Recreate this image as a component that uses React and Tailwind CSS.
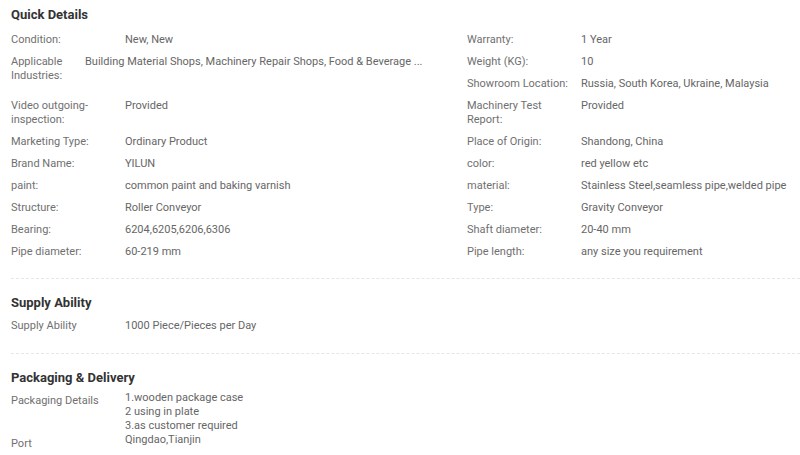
import React from "react";

const leftRows = [
  { l: ["Condition:"], v: "New, New", h: "h-[22px]" },
  { l: ["Applicable", "Industries:"], v: "Building Material Shops, Machinery Repair Shops, Food & Beverage ...", h: "h-[44px]", lw: "w-[74px]" },
  { l: ["Video outgoing-", "inspection:"], v: "Provided", h: "h-[36px]" },
  { l: ["Marketing Type:"], v: "Ordinary Product", h: "h-[22px]" },
  { l: ["Brand Name:"], v: "YILUN", h: "h-[22px]" },
  { l: ["paint:"], v: "common paint and baking varnish", h: "h-[22px]" },
  { l: ["Structure:"], v: "Roller Conveyor", h: "h-[22px]" },
  { l: ["Bearing:"], v: "6204,6205,6206,6306", h: "h-[22px]" },
  { l: ["Pipe diameter:"], v: "60-219 mm", h: "h-[22px]" },
];

const rightRows = [
  { l: ["Warranty:"], v: "1 Year", h: "h-[22px]" },
  { l: ["Weight (KG):"], v: "10", h: "h-[22px]" },
  { l: ["Showroom Location:"], v: "Russia, South Korea, Ukraine, Malaysia", h: "h-[22px]" },
  { l: ["Machinery Test", "Report:"], v: "Provided", h: "h-[36px]" },
  { l: ["Place of Origin:"], v: "Shandong, China", h: "h-[22px]" },
  { l: ["color:"], v: "red yellow etc", h: "h-[22px]" },
  { l: ["material:"], v: "Stainless Steel,seamless pipe,welded pipe", h: "h-[22px]" },
  { l: ["Type:"], v: "Gravity Conveyor", h: "h-[22px]" },
  { l: ["Shaft diameter:"], v: "20-40 mm", h: "h-[22px]" },
  { l: ["Pipe length:"], v: "any size you requirement", h: "h-[22px]" },
];

function Row({ r }) {
  return (
    <div className={`flex py-[4px] box-border ${r.h}`}>
      <div className={`${r.lw || "w-[114px]"} shrink-0 text-[#707070]`}>
        {r.l.map((t, i) => (
          <div key={i}>{t}</div>
        ))}
      </div>
      <div className="flex-1 whitespace-nowrap overflow-hidden text-[#666]">{r.v}</div>
    </div>
  );
}

function Heading({ children }) {
  return (
    <div className="text-[13px] leading-[18px] font-bold text-[#333]">{children}</div>
  );
}

function Divider() {
  return <div className="border-t border-dashed border-[#e6e6e6]" />;
}

export default function App() {
  return (
    <div
      className="w-[800px] h-[455px] bg-white overflow-hidden pl-[11px] text-[11px] leading-[14px]"
      style={{ fontFamily: "Roboto, 'Liberation Sans', sans-serif" }}
    >
      <div className="pt-[6px]">
        <Heading>Quick Details</Heading>
        <div className="flex mt-[5px]">
          <div className="w-[456px] shrink-0">
            {leftRows.map((r, i) => (
              <Row key={i} r={r} />
            ))}
          </div>
          <div className="flex-1">
            {rightRows.map((r, i) => (
              <Row key={i} r={r} />
            ))}
          </div>
        </div>
      </div>
      <div className="mt-[15px]">
        <Divider />
      </div>
      <div className="pt-[15px]">
        <Heading>Supply Ability</Heading>
        <div className="mt-[3px]">
          <Row r={{ l: ["Supply Ability"], v: "1000 Piece/Pieces per Day", h: "h-[22px]" }} />
        </div>
      </div>
      <div className="mt-[16px]">
        <Divider />
      </div>
      <div className="pt-[15px]">
        <Heading>Packaging &amp; Delivery</Heading>
        <div className="mt-[4px]">
          <div className="flex">
            <div className="w-[114px] shrink-0 text-[#707070] pt-[3px]">Packaging Details</div>
            <div className="text-[#666]">
              <div>1.wooden package case</div>
              <div>2 using in plate</div>
              <div>3.as customer required</div>
            </div>
          </div>
          <div className="flex">
            <div className="w-[114px] shrink-0 text-[#707070] pt-[4px]">Port</div>
            <div className="text-[#666]">Qingdao,Tianjin</div>
          </div>
        </div>
      </div>
    </div>
  );
}
